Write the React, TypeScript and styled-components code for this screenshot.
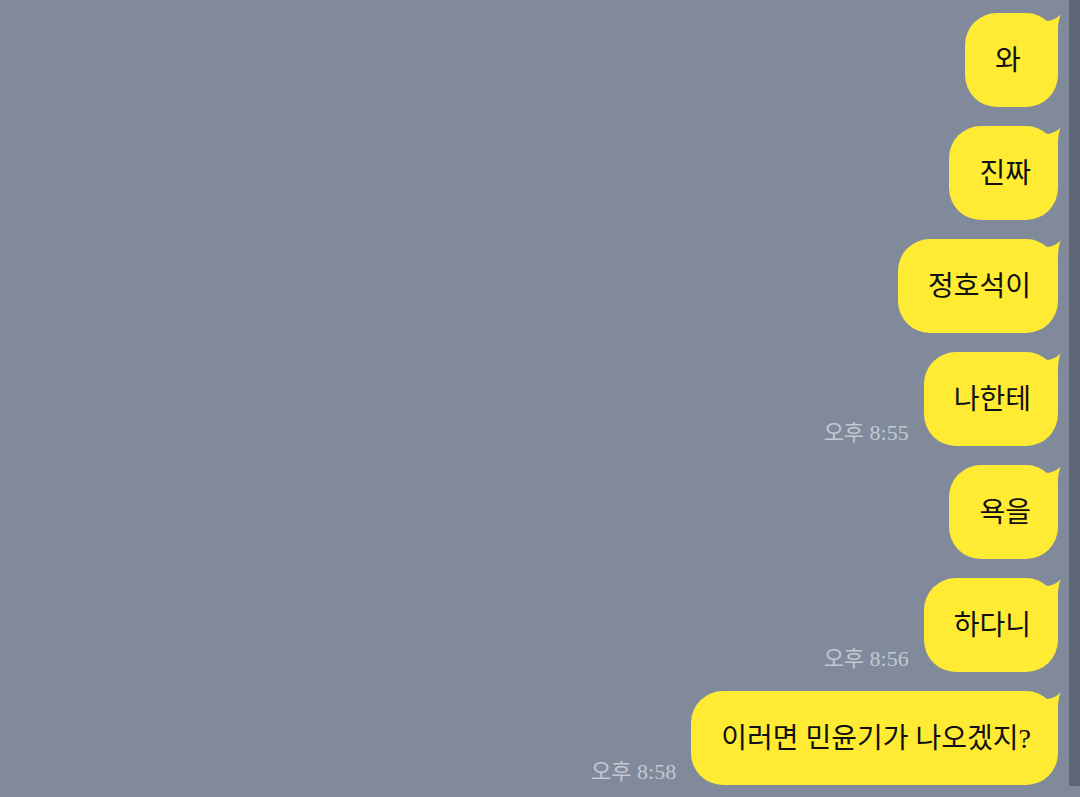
import styled, { createGlobalStyle } from 'styled-components';

const GlobalStyle = createGlobalStyle`
  html, body {
    margin: 0;
    padding: 0;
    overflow: hidden;
    background: #808a9b;
  }
`;

const messages = [
  { id: 1, text: '와' },
  { id: 2, text: '진짜' },
  { id: 3, text: '정호석이' },
  { id: 4, text: '나한테', time: '오후 8:55' },
  { id: 5, text: '욕을' },
  { id: 6, text: '하다니', time: '오후 8:56' },
  { id: 7, text: '이러면 민윤기가 나오겠지?', time: '오후 8:58' },
];

// --- Styled components ---
const Screen = styled.div`
  display: grid;
  grid-template-columns: 1fr 11px;
  width: 1080px;
  height: 797px;
  background: #808a9b;
  font-family: 'Liberation Serif', 'Noto Sans CJK KR', serif;
`;

const ChatList = styled.div`
  display: flex;
  flex-direction: column;
  align-items: flex-end;
  gap: 19px;
  padding: 13px 11px 0 0;
`;

const Row = styled.div`
  display: flex;
  align-items: flex-end;
  gap: 15px;
`;

const Time = styled.span`
  color: #c3c8d1;
  font-size: 22px;
  line-height: 24px;
  padding-bottom: 1px;
  white-space: nowrap;
`;

const Bubble = styled.div`
  position: relative;
  background: #ffeb33;
  color: #111;
  font-size: 28px;
  line-height: 38px;
  padding: 29px 27px 27px 30px;
  border-radius: 32px;
  white-space: nowrap;
  min-width: 36px;
`;

const Tail = styled.svg`
  position: absolute;
  top: 0;
  right: -3px;
  width: 20px;
  height: 36px;
`;

const ScrollTrack = styled.div`
  display: flex;
  flex-direction: column;
`;

const ScrollThumb = styled.div`
  height: 786px;
  background: #5e6575;
`;

export default function App() {
  return (
    <Screen>
      <GlobalStyle />
      <ChatList>
        {messages.map((m) => (
          <Row key={m.id}>
            {m.time && <Time>{m.time}</Time>}
            <Bubble>
              {m.text}
              <Tail viewBox="-17 0 20 36">
                <path
                  d="M -16 8 Q -4 9 2.5 1.5 Q -0.5 10 0 20 L 0 34 L -16 34 Z"
                  fill="#ffeb33"
                />
              </Tail>
            </Bubble>
          </Row>
        ))}
      </ChatList>
      <ScrollTrack>
        <ScrollThumb />
      </ScrollTrack>
    </Screen>
  );
}
